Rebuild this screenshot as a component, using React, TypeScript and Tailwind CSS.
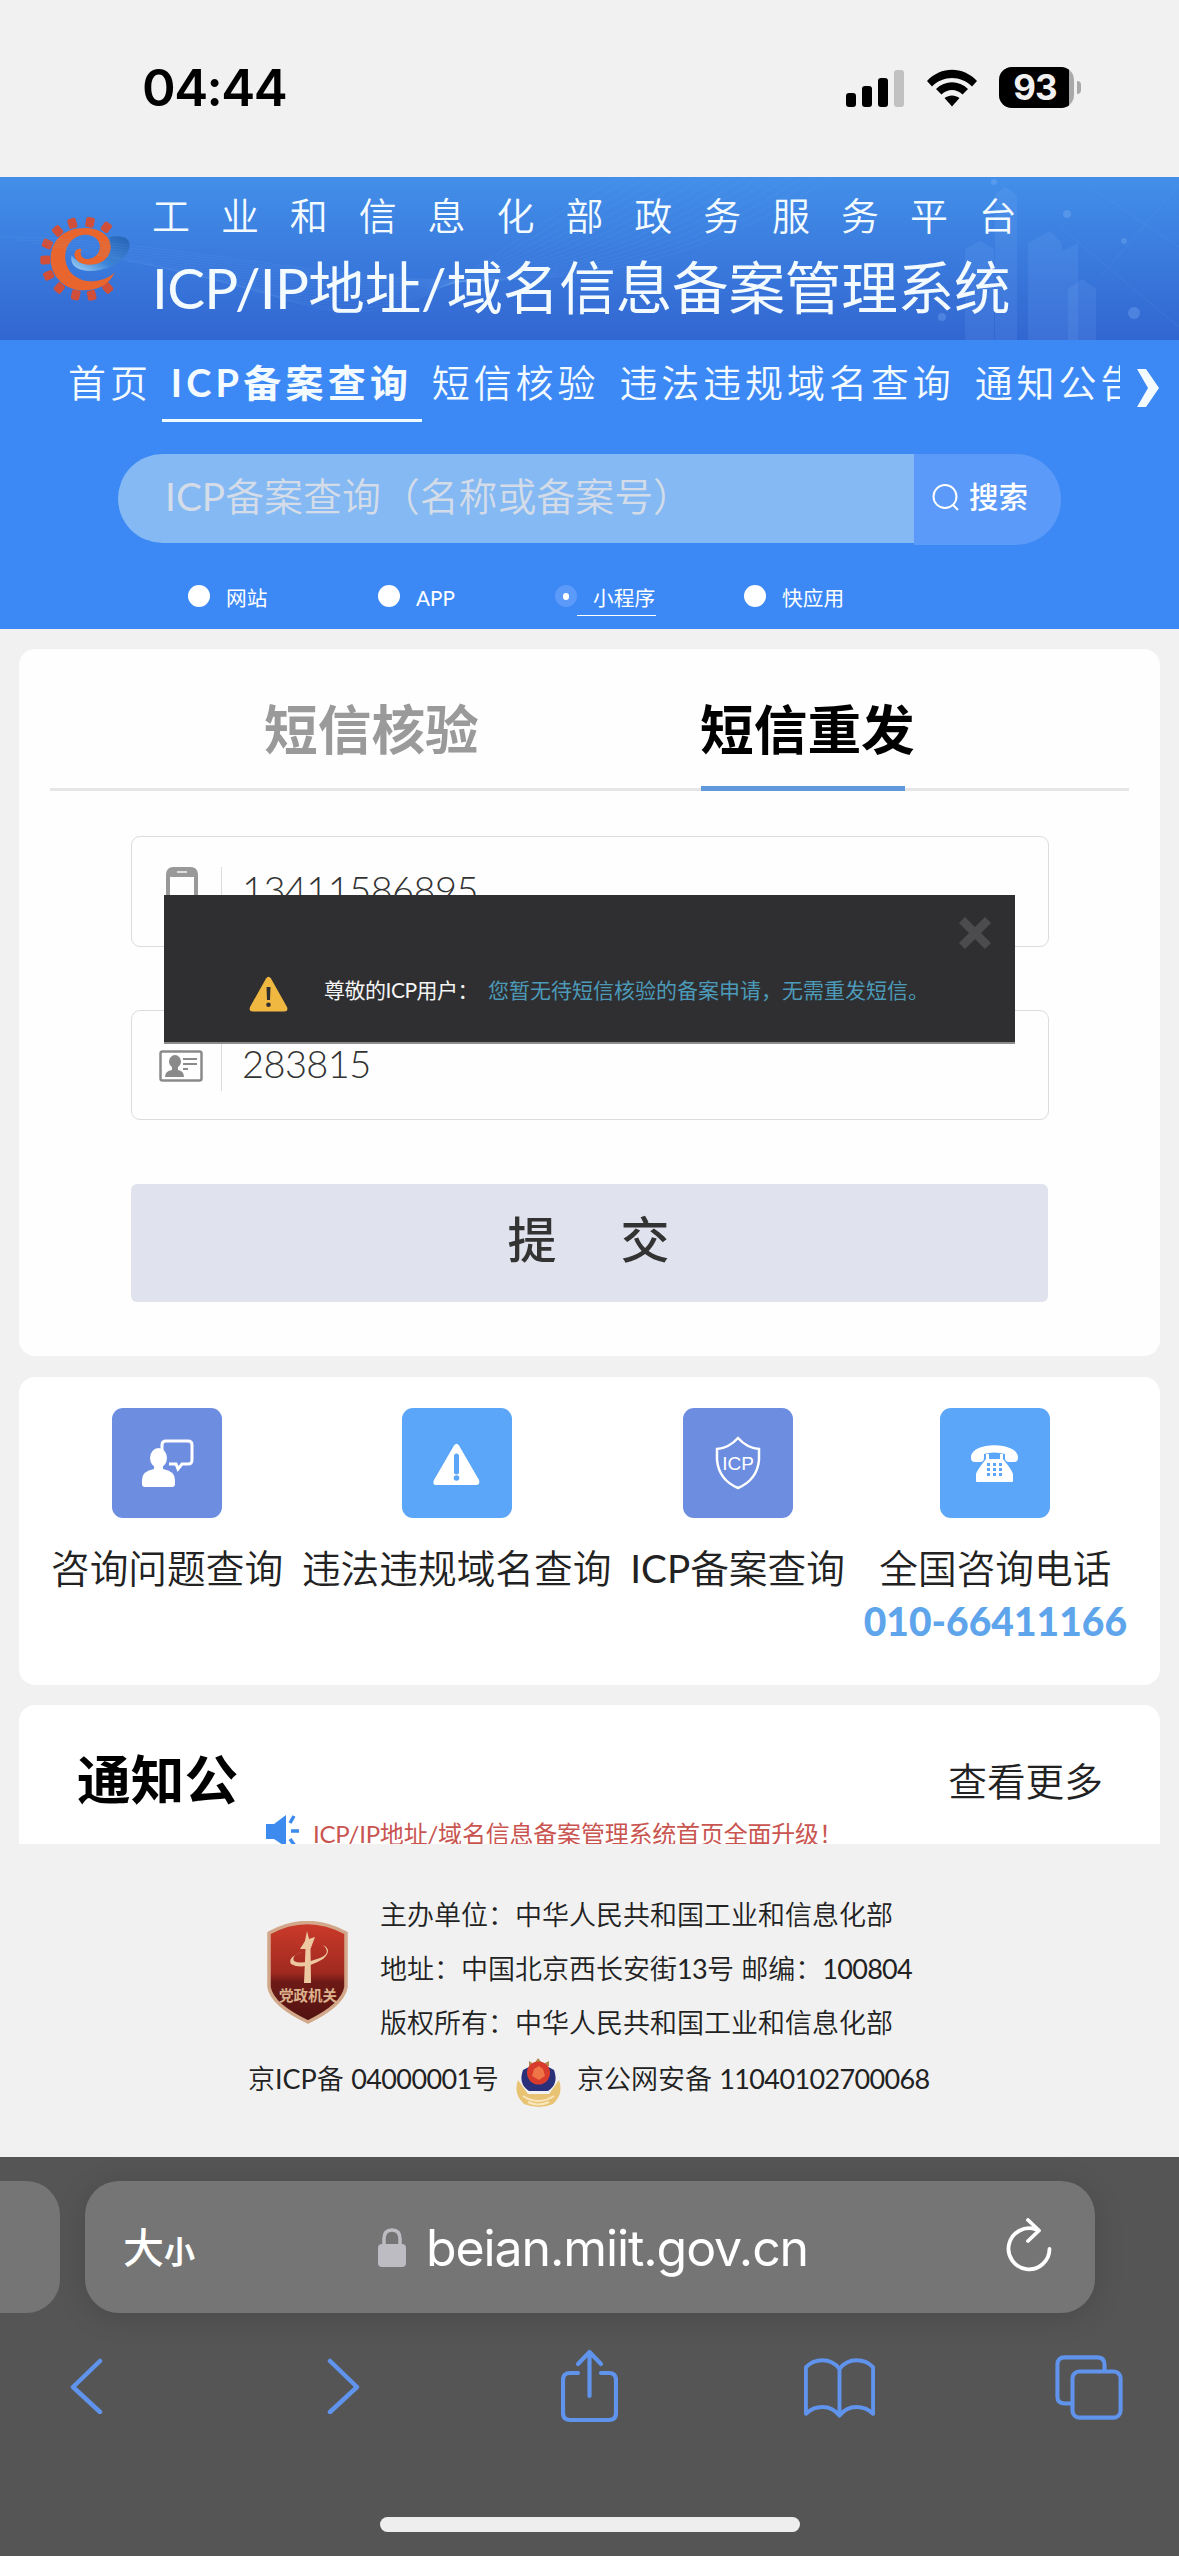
import type { ReactNode } from "react";

const CJK = "font-['Lato','Noto_Sans_CJK_SC',sans-serif]";

/* 状态栏：时间、信号、Wi-Fi、电量 */
function StatusBar() {
  return (
    <div className="flex h-[177px] items-start pt-[61px] font-['Inter','Liberation_Sans',sans-serif]">
      <span className="ml-[142px] w-[159px] text-[51px] font-semibold leading-[54px] tracking-[-1.5px] whitespace-nowrap text-black">
        04:44
      </span>
      <div className="mt-[6px] ml-[545px] flex items-center">
        <svg width="58" height="38" viewBox="0 0 58 38">
          <rect x="0" y="24" width="10" height="14" rx="3" />
          <rect x="16" y="17" width="10" height="21" rx="3" />
          <rect x="32" y="9" width="10" height="29" rx="3" />
          <rect x="48" y="1" width="10" height="37" rx="3" fill="#c1c1c1" />
        </svg>
        <svg className="ml-[23px]" width="50" height="38" viewBox="0 0 50 38">
          <path d="M0 12C14-3 36-3 50 12L45 17.500C34 6 16 6 5 17.500Z" />
          <path d="M9 20C18 11 32 11 41 20L35.500 25.500C29.500 19.500 20.500 19.500 14.500 25.500Z" />
          <path d="M17.500 29C22 25.500 28 25.500 32.500 29L25 37.500Z" />
        </svg>
        <div className="ml-[22px] flex items-center">
          <div className="flex h-[41px] w-[75px] overflow-hidden rounded-[13px] bg-[#a9a9a9]">
            <div className="flex w-[70px] items-center justify-center bg-black pl-[2px] text-[35px] font-bold tracking-[-0.8px] text-[#f1f1f1]">
              93
            </div>
          </div>
          <div className="ml-[3px] h-[13px] w-[4px] rounded-r-[4px] bg-[#a9a9a9]" />
        </div>
      </div>
    </div>
  );
}

/* 齿轮形 e 字标志 */
function GearLogo() {
  const teeth = [
    [157, 70], [210, 67], [259, 82], [113, 93], [82, 132], [76, 180],
    [86, 226], [118, 264], [167, 285], [215, 286], [263, 264],
  ];
  return (
    <svg className="mt-[23px] ml-[20px] shrink-0" width="130" height="120" viewBox="0 0 390 360">
      <defs>
        <linearGradient id="swoosh" x1="1" y1="0" x2="0" y2="1">
          <stop offset="0" stopColor="#2763b5" />
          <stop offset="0.6" stopColor="#3c85d8" />
          <stop offset="1" stopColor="#a8d6f6" />
        </linearGradient>
      </defs>
      {teeth.map(([x, y]) => (
        <rect
          key={`${x}-${y}`}
          x={x - 13}
          y={y - 15}
          width="26"
          height="30"
          rx="6"
          fill="#cf4f3a"
          transform={`rotate(${(Math.atan2(y - 178, x - 190) * 180) / Math.PI + 90} ${x} ${y})`}
        />
      ))}
      <path
        d="M268 112C318 100 338 122 325 153C308 190 258 214 205 213C168 210 148 192 155 166C175 200 250 195 272 150Z"
        fill="url(#swoosh)"
      />
      <path
        d="M285 217C264 260 226 272 188 271C130 269 92 226 92 176C92 120 135 84 192 84C242 84 274 108 272 145C269 178 238 196 204 194C172 191 156 170 166 154C171 146 180 144 185 148C178 160 184 178 204 177C230 175 243 152 239 134C233 107 202 98 174 109C142 122 129 160 139 193C150 230 190 249 226 243C252 240 270 231 285 217Z"
        fill="#e8662d"
      />
    </svg>
  );
}

function SiteHeader() {
  return (
    <header className="relative flex h-[163px] overflow-hidden bg-linear-to-b from-[#438fe9] to-[#3266d1] text-[#f4fbff]">
      <svg className="absolute inset-0" width="1179" height="163" viewBox="0 0 1179 163" fill="none">
        <g stroke="#7db4f5" strokeOpacity="0.11">
          {Array.from({ length: 16 }, (_, i) => (
            <path key={i} d={`M${i * 16} ${60 + i * 3}C${260 + i * 10} ${60 + i * 8} ${560 - i * 8} ${190 - i * 6} ${830 - i * 14} 0`} />
          ))}
        </g>
        <g fill="#8fc0fb" fillOpacity="0.12">
          <path d="M965 72L980 64L994 72V163H965Z" />
          <path d="M995 18L1005 10L1017 18V163H995Z" />
          <path d="M1028 66L1050 54L1062 66V163H1028Z" />
          <path d="M1062 74L1078 66V163H1062Z" />
          <path d="M1068 112L1082 102L1096 112V163H1068Z" />
        </g>
        <g fill="#8fc0fb" fillOpacity="0.28">
          <circle cx="1067" cy="37" r="4" />
          <circle cx="1124" cy="64" r="3" />
          <circle cx="1134" cy="136" r="6" />
          <circle cx="942" cy="140" r="4" />
          <circle cx="994" cy="5" r="3" />
        </g>
        <path d="M1090 10L1179 70M1060 50L1179 150M1179 8L1100 100" stroke="#8fc0fb" strokeOpacity="0.1" />
      </svg>
      <GearLogo />
      <div className="relative pl-[2px]">
        <div className="mt-[13px] text-[38px] font-[350] leading-[50px] tracking-[30.9px] whitespace-nowrap">
          工业和信息化部政务服务平台
        </div>
        <div className="mt-[12px] text-[56.600px] leading-[70px] font-normal tracking-[-0.2px] whitespace-nowrap">
          <span className="tracking-[-0.7px]">ICP/IP</span>地址/域名信息备案管理系统
        </div>
      </div>
    </header>
  );
}

function NavBar() {
  const items = ["首页", "ICP备案查询", "短信核验", "违法违规域名查询", "通知公告"];
  return (
    <nav className="flex h-[82px] items-start text-[#f4fbff]">
      <div className="flex w-[1120px] overflow-hidden pl-[58px]">
        {items.map((item) => (
          <a
            key={item}
            className={`flex h-[82px] shrink-0 items-start border-b-[3px] px-[10px] pt-[17px] text-[38px] leading-[50px] whitespace-nowrap ${
              item === "ICP备案查询"
                ? "w-[260px] border-[#eefaff] pl-[9px] font-bold tracking-[4.2px]"
                : "border-transparent font-[350] tracking-[3.9px]"
            }`}
          >
            {item}
          </a>
        ))}
      </div>
      <svg className="mt-[28px] ml-[16px]" width="24" height="40" viewBox="0 0 24 40">
        <path d="M1 1H10L23 20L10 39H1L12 20Z" fill="#f4fbff" />
      </svg>
    </nav>
  );
}

function SearchBox() {
  return (
    <div className="mt-[32px] ml-[118px] flex h-[91px] items-start">
      <div className="flex h-[89px] w-[796px] items-center rounded-l-[45px] bg-[#84b9f3] pb-[5px] pl-[47px] text-[38.900px] font-[350] whitespace-nowrap text-[#d3dce8]">
        <span className="font-normal">ICP</span>备案查询（名称或备案号）
      </div>
      <button className="flex h-[91px] w-[147px] items-center rounded-r-[45px] bg-[#5b9af8] pb-[4px] pl-[18px] text-[29.500px] font-medium whitespace-nowrap text-white">
        <svg width="27" height="27" viewBox="0 0 27 27" fill="none" stroke="#fff" strokeWidth="2">
          <circle cx="13" cy="12.500" r="11.500" />
          <path d="M20.500 20.500L26 26" />
        </svg>
        <span className="ml-[10px]">搜索</span>
      </button>
    </div>
  );
}

function TypeRadios() {
  return (
    <div className="mt-[36px] ml-[188px] flex h-[48px] items-start text-[20.700px] leading-[34px] text-white">
      <label className="flex w-[190px] items-start">
        <i className="mt-[4px] h-[22px] w-[22px] rounded-full bg-white" />
        <span className="ml-[16px]">网站</span>
      </label>
      <label className="flex w-[177px] items-start">
        <i className="mt-[4px] h-[22px] w-[22px] rounded-full bg-white" />
        <span className="ml-[16px]">APP</span>
      </label>
      <label className="flex w-[189px] items-start">
        <i className="mt-[4px] flex h-[22px] w-[22px] items-center justify-center rounded-full bg-[#5b9af8]">
          <i className="h-[7px] w-[6px] rounded-full bg-white" />
        </i>
        <span className="h-[35px] w-[79px] border-b border-white pl-[16px] whitespace-nowrap">小程序</span>
      </label>
      <label className="flex items-start">
        <i className="mt-[4px] h-[22px] w-[22px] rounded-full bg-white" />
        <span className="ml-[16px]">快应用</span>
      </label>
    </div>
  );
}

function InputRow({ icon, value, className }: { icon: ReactNode; value: string; className: string }) {
  return (
    <div className={`flex w-[918px] rounded-[9px] border border-[#dcdcdc] ${className}`}>
      <div className="mt-[30px] flex h-[50px] w-[90px] justify-end border-r border-[#dcdcdc]">{icon}</div>
      <span className="mt-[27px] ml-[20px] text-[38px] leading-[50px] font-light tracking-[-0.6px] text-[#333]">{value}</span>
    </div>
  );
}

/* 遮住两个输入框的提示弹窗 */
function Toast() {
  return (
    <div className="absolute top-[246px] left-[145px] h-[149px] w-[851px] border-b-2 border-[#8d8d8d] bg-[#2f2f31]">
      <svg className="mt-[21px] ml-[794px]" width="34" height="34" viewBox="0 0 34 34">
        <path d="M7 1L17 11L27 1L33 7L23 17L33 27L27 33L17 23L7 33L1 27L11 17L1 7Z" fill="#4c4c4e" />
      </svg>
      <div className="mt-[26px] ml-[85px] flex h-[36px] text-[21px] leading-[32px] whitespace-nowrap">
        <svg width="39" height="36" viewBox="0 0 39 36">
          <path d="M17 2.500Q19.500-1 22 2.500L38 31Q39.500 35.500 35 35.500H4Q-0.500 35.500 1 31Z" fill="#f0b840" />
          <path d="M17.500 11H21.500L21 24H18Z" fill="#2f2f31" />
          <circle cx="19.500" cy="28.800" r="2.300" fill="#2f2f31" />
        </svg>
        <span className="-mt-[2px] ml-[36px] w-[164px] tracking-[-0.5px] text-[#f4f4f4]">尊敬的ICP用户：</span>
        <span className="-mt-[2px] text-[#4c9ab8]">您暂无待短信核验的备案申请，无需重发短信。</span>
      </div>
    </div>
  );
}

function ResendCard() {
  return (
    <section className="relative mx-[19px] mt-[20px] h-[707px] rounded-[16px] bg-[#fefefe]">
      <div className="mx-[31px] flex h-[142px] items-start border-b-[3px] border-[#e6e6e6] text-[53.700px] font-bold leading-[70px] whitespace-nowrap">
        <span className="mt-[45px] ml-[214px] w-[437px] text-[#9a9a9a]">短信核验</span>
        <span className="h-[142px] w-[204px] border-b-[5px] border-[#6098dc] pt-[45px] text-black">
          <span className="-ml-px">短信重发</span>
        </span>
      </div>
      <InputRow
        className="mt-[45px] ml-[112px] h-[111px]"
        value="13411586895"
        icon={
          <svg className="mr-[23px]" width="32" height="48" viewBox="0 0 32 48">
            <rect x="2" y="2" width="28" height="46" rx="5" fill="none" stroke="#999" strokeWidth="4" />
            <rect x="2" y="1" width="28" height="9" rx="3" fill="#999" />
            <rect x="11" y="4" width="10" height="2" fill="#ddd" />
          </svg>
        }
      />
      <InputRow
        className="mt-[63px] ml-[112px] h-[110px]"
        value="283815"
        icon={
          <svg className="mt-[9px] mr-[18px]" width="44" height="32" viewBox="0 0 44 32" fill="#8a8a8a">
            <rect x="1.500" y="1.500" width="41" height="29" rx="2" fill="none" stroke="#8a8a8a" strokeWidth="2.500" />
            <ellipse cx="16" cy="11.500" rx="6" ry="6.500" />
            <path d="M13 16H19V20Q25 21 25 27H6Q6 21 13 20Z" />
            <path d="M24 8H38V10H24ZM24 13H38V15H24ZM24 18H29V20H24Z" />
          </svg>
        }
      />
      <button className="mt-[64px] ml-[112px] flex h-[118px] w-[917px] justify-center gap-[64px] rounded-[6px] bg-[#e0e2ee] pt-[20px] pr-[2px] text-[49px] font-medium leading-[70px] text-[#333]">
        <span>提</span>
        <span>交</span>
      </button>
      <Toast />
    </section>
  );
}

function Shortcut({ className, label, children }: { className: string; label: ReactNode; children: ReactNode }) {
  return (
    <div className="flex flex-col items-center">
      <svg className={`h-[110px] w-[110px] rounded-[11px] ${className}`} viewBox="0 0 110 110">
        {children}
      </svg>
      <span className="mt-[25px] text-[38.700px] font-[350] leading-[50px] whitespace-nowrap text-[#222]">{label}</span>
    </div>
  );
}

function ShortcutCard() {
  return (
    <section className="mx-[19px] mt-[21px] flex h-[308px] items-start gap-[18.800px] rounded-[16px] bg-white pt-[31px] pl-[32px]">
      <Shortcut className="bg-[#6c8de0]" label="咨询问题查询">
        <path d="M50 45V37Q50 33 54 33H76Q80 33 80 37V52Q80 56 76 56H70L66 61L64 56H57" fill="none" stroke="#fff" strokeWidth="3" />
        <ellipse cx="46.500" cy="50" rx="8.500" ry="10" fill="#fff" />
        <path d="M42 56H51V61Q63 63 63 72V76Q63 79 60 79H33Q30 79 30 76V72Q30 63 42 61Z" fill="#fff" />
      </Shortcut>
      <Shortcut className="bg-[#5ba6f9]" label="违法违规域名查询">
        <path d="M52 37.500Q54.500 34 57 37.500L77 72Q78.500 77 74 77H34Q30 77 32 72Z" fill="#fff" />
        <path d="M54.500 48V64" stroke="#5ba6f9" strokeWidth="5" strokeLinecap="round" />
        <circle cx="54.500" cy="70" r="2.800" fill="#5ba6f9" />
      </Shortcut>
      <Shortcut
        className="bg-[#6c8de0]"
        label={
          <>
            <span className="font-normal">ICP</span>备案查询
          </>
        }
      >
        <path d="M55 30Q64 40 76 41V52Q74 72 55 80Q36 72 34 52V41Q46 40 55 30Z" fill="none" stroke="#fff" strokeWidth="2.500" />
        <text x="55" y="62" textAnchor="middle" fill="#fff" fontFamily="Liberation Sans" fontSize="19">ICP</text>
      </Shortcut>
      <div className="flex flex-col items-center">
        <Shortcut className="bg-[#5ba6f9]" label="全国咨询电话">
          <path d="M31 50C30 33 79 33 78 50Q78 54 74 54H69Q65 54 65 50V46Q54 43 44 46V50Q44 54 40 54H35Q31 54 31 50Z" fill="#fff" />
          <path d="M46 46H49V51H60V46H63V51Q72 62 73 66V73Q73 74 72 74H37Q36 74 36 73V66Q37 62 46 51Z" fill="#fff" />
          <path d="M47 55H50V58H47ZM53 55H56V58H53ZM59 55H62V58H59ZM47 60H50V63H47ZM53 60H56V63H53ZM59 60H62V63H59ZM47 65H50V68H47ZM53 65H56V68H53ZM59 65H62V68H59Z" fill="#5ba6f9" />
        </Shortcut>
        <span className="mt-[3px] text-[39px] font-black leading-[50px] whitespace-nowrap text-[#5fa5ec]">010-66411166</span>
      </div>
    </section>
  );
}

function NoticeCard() {
  return (
    <section className="mx-[19px] mt-[20px] h-[139px] overflow-hidden rounded-t-[16px] bg-white">
      <div className="flex h-[110px] items-start justify-between pr-[57px] pl-[58px] whitespace-nowrap">
        <h2 className="mt-[39px] text-[53.700px] font-bold leading-[70px] text-black">通知公</h2>
        <span className="mt-[51px] text-[38.700px] font-[350] leading-[50px] text-[#222]">查看更多</span>
      </div>
      <div className="flex pl-[247px] text-[24px] leading-[37px] whitespace-nowrap text-[#c95551]">
        <svg width="34" height="32" viewBox="0 0 34 32" fill="#3d8bee">
          <path d="M0 9H8L20 0V32L8 24H0Z" />
          <path d="M24 8L28 1M25 16H33M24 24L29 31" stroke="#3d8bee" strokeWidth="3.500" />
        </svg>
        <span className="ml-[13px] tracking-[-0.2px]">ICP/IP地址/域名信息备案管理系统首页全面升级！</span>
      </div>
    </section>
  );
}

function PageFooter() {
  return (
    <footer className="h-[313px] pt-[44px] text-[27px] font-[350] leading-[53.800px] whitespace-nowrap text-[#222]">
      <div className="flex pl-[267px]">
        <svg className="mt-[33px] mr-[32px]" width="81" height="103" viewBox="0 0 81 103">
          <defs>
            <linearGradient id="shield" x1="0" y1="0" x2="0" y2="1">
              <stop offset="0" stopColor="#cc3a2a" />
              <stop offset="0.5" stopColor="#a02a20" />
              <stop offset="0.6" stopColor="#6e1a17" />
              <stop offset="1" stopColor="#4f1211" />
            </linearGradient>
          </defs>
          <path d="M2 12Q40-9 79 12V66Q76 84 41 101Q5 84 2 66Z" fill="url(#shield)" stroke="#d3a88a" strokeWidth="3.500" />
          <path d="M37 62L38.500 28H33L38 20L40 10L42 18L48 16L43.500 28L44 62Z" fill="#ecc9a0" />
          <path d="M56 24Q66 33 50 38Q34 44 27 40Q24 34 36 31Q20 36 24 43Q36 50 56 38Q66 29 56 24Z" fill="#ecc9a0" />
          <text x="41" y="80" textAnchor="middle" fontSize="14.500" fontWeight="700" fill="#dcb28e" fontFamily="Noto Sans CJK SC">党政机关</text>
        </svg>
        <div>
          <p>主办单位：中华人民共和国工业和信息化部</p>
          <p>
            地址：中国北京西长安街<span className="font-normal tracking-[-0.7px]">13</span>号 邮编：
            <span className="font-normal tracking-[-0.7px]">100804</span>
          </p>
          <p>版权所有：中华人民共和国工业和信息化部</p>
        </div>
      </div>
      <div className="flex items-start pt-[3px] pl-[248px]">
        <span className="w-[267px]">
          京<span className="font-normal">ICP</span>备 <span className="font-normal tracking-[-0.6px]">04000001</span>号
        </span>
        <svg className="mt-[6px] mr-[15px]" width="47" height="50" viewBox="0 0 47 50">
          <path d="M3 22Q-2 36 9 46Q24 52 38 46Q49 36 44 22L34 36H13Z" fill="#e8c373" />
          <path d="M8 38Q23 48 39 38M13 44Q23 49 34 44" stroke="#f8e6bd" strokeWidth="2" fill="none" />
          <path d="M8 12Q3 26 14 33H33Q44 26 39 12L24 4Z" fill="#2a2f7a" />
          <path d="M14 3L19 6L23 0L28 6L34 3V8H14Z" fill="#b08a4e" />
          <circle cx="23.500" cy="15" r="11.500" fill="#d83a2c" />
          <path d="M17 18L19 11L24 8L28 11L30 18L24 22Z" fill="#ef7446" />
        </svg>
        <span>
          京公网安备 <span className="font-normal tracking-[-0.65px]">11040102700068</span>
        </span>
      </div>
    </footer>
  );
}

/* Safari 地址栏与底部工具栏 */
function BrowserBar() {
  return (
    <div className="h-[399px] overflow-hidden bg-[#555] pt-[24px]">
      <div className="flex h-[132px] gap-[25px]">
        <div className="w-[60px] rounded-r-[34px] bg-[#757575]" />
        <div className="flex w-[1010px] rounded-[34px] bg-[#757575] font-['Inter','Noto_Sans_CJK_SC',sans-serif] text-white shadow-[0_4px_30px_rgba(0,0,0,0.14)]">
          <div className="flex items-baseline pt-[34px] pl-[38px] leading-[66px]">
            <span className="text-[41px] font-medium">大</span>
            <span className="text-[31px] font-bold">小</span>
          </div>
          <svg className="mt-[47px] ml-[183px]" width="28" height="39" viewBox="0 0 28 39">
            <path d="M6 18V11Q6 2 14 2Q22 2 22 11V18" fill="none" stroke="#bdbcc3" strokeWidth="3.500" />
            <rect x="0" y="16" width="28" height="23" rx="4" fill="#bdbcc3" />
          </svg>
          <span className="ml-[20px] w-[580px] pt-[34px] text-[50px] leading-[66px] tracking-[-1.1px] whitespace-nowrap">
            beian.miit.gov.cn
          </span>
          <svg className="mt-[37px] shrink-0" width="46" height="54" viewBox="0 0 46 54" fill="none" stroke="#fff" strokeWidth="3.800" strokeLinecap="round" strokeLinejoin="round">
            <path d="M30 11.500A20.500 20.500 0 1 0 43.500 31" />
            <path d="M22 2L33 12.500L22 23" />
          </svg>
        </div>
      </div>
      <div className="mt-[36px] flex h-[74px] items-center pl-[70px]">
        <svg width="34" height="56" viewBox="0 0 34 56" fill="none" stroke="#5f93ec" strokeWidth="4.500" strokeLinecap="round" strokeLinejoin="round">
          <path d="M30 3L3 29L30 54" />
        </svg>
        <svg className="ml-[222px]" width="34" height="56" viewBox="0 0 34 56" fill="none" stroke="#5f93ec" strokeWidth="4.500" strokeLinecap="round" strokeLinejoin="round">
          <path d="M4 3L31 29L4 54" />
        </svg>
        <svg className="ml-[201px]" width="57" height="74" viewBox="0 0 57 74" fill="none" stroke="#5f93ec" strokeWidth="4.200" strokeLinecap="round" strokeLinejoin="round">
          <path d="M17 24H9Q2 24 2 31V64Q2 71 9 71H48Q55 71 55 64V31Q55 24 48 24H40" />
          <path d="M28.500 47V4M17 15L28.500 3L40 15" />
        </svg>
        <svg className="mt-[4px] ml-[186px]" width="71" height="61" viewBox="0 0 73 62" fill="none" stroke="#5f93ec" strokeWidth="4" strokeLinejoin="round">
          <path d="M36.500 11Q30 2 19 2Q9 2 2 9V57Q9 50 19 50Q30 50 36.500 59Q43 50 54 50Q64 50 71 57V9Q64 2 54 2Q43 2 36.500 11ZM36.500 11V59" />
        </svg>
        <svg className="mt-[3px] ml-[180px]" width="68" height="67" viewBox="0 0 70 67" fill="none" stroke="#5f93ec" strokeWidth="4.200" strokeLinejoin="round">
          <rect x="18" y="17" width="49.500" height="47.500" rx="7" />
          <path d="M18 50H10Q2.500 50 2.500 43V10Q2.500 2.500 10 2.500H43Q51 2.500 51 10V17" />
        </svg>
      </div>
      <div className="mx-auto mt-[94px] h-[15px] w-[420px] rounded-full bg-[#eee]" />
    </div>
  );
}

export default function App() {
  return (
    <div className={`h-[2556px] w-[1179px] overflow-hidden bg-[#f1f1f1] ${CJK}`}>
      <StatusBar />
      <SiteHeader />
      <div className="h-[289px] bg-[#3c89f6]">
        <NavBar />
        <SearchBox />
        <TypeRadios />
      </div>
      <ResendCard />
      <ShortcutCard />
      <NoticeCard />
      <PageFooter />
      <BrowserBar />
    </div>
  );
}
